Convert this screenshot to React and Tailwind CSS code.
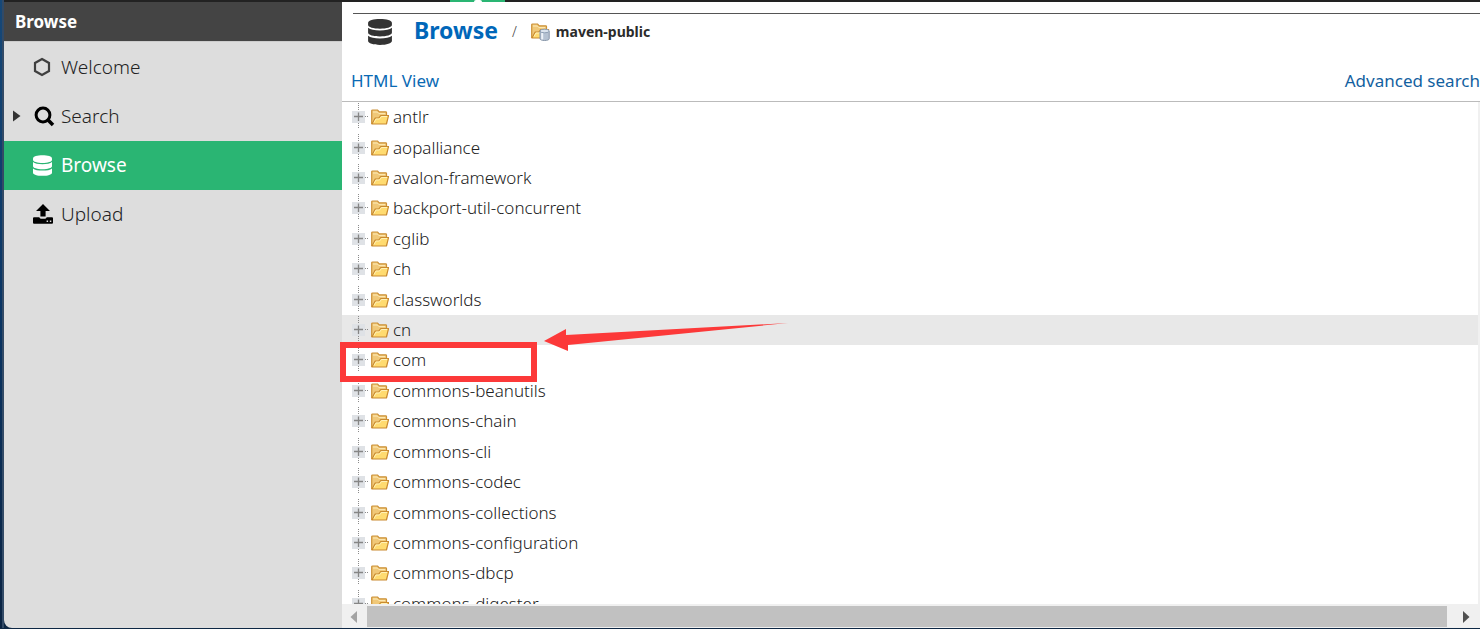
const FOLDERS = [
  'antlr',
  'aopalliance',
  'avalon-framework',
  'backport-util-concurrent',
  'cglib',
  'ch',
  'classworlds',
  'cn',
  'com',
  'commons-beanutils',
  'commons-chain',
  'commons-cli',
  'commons-codec',
  'commons-collections',
  'commons-configuration',
  'commons-dbcp',
  'commons-digester',
];

function HexagonIcon() {
  return (
    <svg width="20" height="20" viewBox="0 0 20 20" fill="none" stroke="#3f3f3f" strokeWidth="2.2" aria-hidden="true">
      <path d="M9 2 16 6v8L9 18 2 14V6z" />
    </svg>
  );
}

function SearchIcon() {
  return (
    <svg width="22" height="22" viewBox="0 0 22 22" fill="none" stroke="#000" aria-hidden="true">
      <circle cx="10" cy="10" r="6.9" strokeWidth="3" />
      <path d="M14.8 14.8 20 20" strokeWidth="3.6" />
    </svg>
  );
}

function DatabaseIcon({ className }) {
  return (
    <svg className={className} viewBox="0 0 22 24" fill="currentColor" aria-hidden="true">
      <path d="M0 3.6C0 1.4 5 0 11 0s11 1.4 11 3.6v2C22 7.6 17 9 11 9S0 7.6 0 5.6z" />
      <path d="M0 8c2 1.700 6 2.500 11 2.500S20 9.700 22 8v4.800c0 2-5 3.400-11 3.400S0 14.800 0 12.800z" />
      <path d="M0 15.400c2 1.700 6 2.500 11 2.500s9-.8 11-2.500v5c0 2.200-5 3.600-11 3.600S0 22.600 0 20.400z" />
    </svg>
  );
}

function UploadIcon() {
  return (
    <svg width="20" height="20" viewBox="0 0 20 20" aria-hidden="true">
      <path d="M10 0 17 7H12.600V12.600H7.400V7H3z" />
      <path
        fillRule="evenodd"
        d="M1 13.200h5.300c.5 1 1.300 1.500 2.300 1.500h2.800c1 0 1.800-.5 2.300-1.500H19q1 0 1 1v4.600q0 1-1 1H1q-1 0-1-1v-4.600q0-1 1-1zM13.600 16.600v1.500h1.500v-1.500zM16.800 16.600v1.500h1.500v-1.500z"
      />
    </svg>
  );
}

function FolderShape() {
  return (
    <>
      <path d="M.7 14.500V1.900Q.7 1 1.600 1h5l1.600 1.800h6.500q.8 0 .8.800V14.500z" fill="#f0c878" stroke="#cc9138" strokeWidth="1.200" />
      <path d="M2 3h4.400l1.500 1.600h6.300" fill="none" stroke="#fdebb8" />
      <path d="M1 15 4.200 9h3.600l1.900-2.500h7.900L15.400 15z" fill="#ffdb70" stroke="#c98a30" strokeWidth="1.200" strokeLinejoin="round" />
      <path d="m3 13.500 2-3.500h3.500l2-2.500h5.600" fill="none" stroke="#fff1b8" />
    </>
  );
}

function FolderIcon() {
  return (
    <svg width="18" height="16" viewBox="0 0 18 16" aria-hidden="true">
      <FolderShape />
    </svg>
  );
}

function RepositoryIcon() {
  return (
    <svg width="19" height="18" viewBox="0 0 19 18" aria-hidden="true">
      <FolderShape />
      <path d="M9 8.200v7.600c0 1 2 1.700 4.600 1.700s4.600-.7 4.600-1.700V8.200z" fill="#b5c2d2" stroke="#8796a9" />
      <path d="M11.200 9v7.400" stroke="#edf2f8" strokeWidth="2" />
      <ellipse cx="13.600" cy="8" rx="4.600" ry="1.800" fill="#dbe4ee" stroke="#8fa0b5" />
    </svg>
  );
}

function ExpanderIcon() {
  return (
    <svg width="18" height="28" viewBox="0 0 18 28" fill="none" aria-hidden="true">
      <rect x="0" y="8" width="13" height="12" fill="#dfe2e6" />
      <path d="M6.500 0v8M6.500 20v6M13 13.500h4" stroke="#8a8a8a" strokeDasharray="1 1" />
      <path d="M6.500 9.500v8.500M2 13.500h9" stroke="#858585" strokeWidth="1.300" />
    </svg>
  );
}

function NavItem({ icon, label, active, expandable }) {
  return (
    <li className={active ? 'bg-[#2ab573]' : ''}>
      <a
        href={`#${label.toLowerCase()}`}
        className={
          active
            ? 'flex h-full items-center pl-[9px] text-[19px] leading-6 text-white'
            : 'flex h-full items-center pl-[9px] text-[19px] leading-6 font-light text-[#222]'
        }
      >
        <span className="flex w-5 items-center">
          {expandable && (
            <svg width="8" height="12" viewBox="0 0 8 12" fill="#333" aria-hidden="true">
              <path d="M0 0.500 7.500 6 0 11.500z" />
            </svg>
          )}
        </span>
        <span className="flex w-7 items-center">{icon}</span>
        {label}
      </a>
    </li>
  );
}

function Sidebar() {
  return (
    <aside className="flex w-[338px] shrink-0 flex-col bg-[#ddd]">
      <h2 className="flex h-10 items-center border-b border-[#ccc] bg-[#444] px-[11px] text-[17px] font-bold text-white">
        Browse
      </h2>
      <nav>
        <ul className="grid h-[197px] grid-rows-4">
          <NavItem icon={<HexagonIcon />} label="Welcome" />
          <NavItem icon={<SearchIcon />} label="Search" expandable />
          <NavItem icon={<DatabaseIcon className="h-[21px] w-[19px]" />} label="Browse" active />
          <NavItem icon={<UploadIcon />} label="Upload" />
        </ul>
      </nav>
    </aside>
  );
}

function Annotation() {
  return (
    <div className="pointer-events-none absolute top-[340px] -left-0.5 flex">
      <div className="h-10 w-[197px] border-[6px] border-[#fc3939]" />
      <svg className="absolute -top-5 left-[204px]" width="246" height="30" viewBox="0 0 246 30" aria-hidden="true">
        <path d="M0 19 22 7v6L244 1 24 23v6z" fill="#fc3939" />
      </svg>
    </div>
  );
}

function Tree() {
  return (
    <div className="flex min-h-0 flex-1 overflow-hidden">
      <ul className="grid h-[517px] flex-1 auto-rows-fr">
        {FOLDERS.map((name) => (
          <li
            key={name}
            className={name === 'cn' ? 'flex items-center bg-[#e8e8e8] pl-2.5' : 'flex items-center pl-2.5'}
          >
            <button type="button" aria-label={`Expand ${name}`} className="mr-px flex">
              <ExpanderIcon />
            </button>
            <FolderIcon />
            <span className="ml-1 text-[17px] leading-6 font-light text-[#222]">{name}</span>
          </li>
        ))}
      </ul>
      <div className="w-0.5 bg-[#f0f0f0]" />
    </div>
  );
}

function Scrollbar() {
  return (
    <div className="flex h-6 shrink-0 items-stretch bg-[#f0f0f0] pt-0.5">
      <button type="button" aria-label="Scroll left" className="flex w-[25px] items-center pl-2">
        <svg width="8" height="12" viewBox="0 0 8 12" fill="#a3a3a3" aria-hidden="true">
          <path d="M7 0v12L.5 6z" />
        </svg>
      </button>
      <div className="mb-px flex-1 bg-[#c1c1c1]" />
      <button type="button" aria-label="Scroll right" className="flex w-[33px] items-center pl-4">
        <svg width="8" height="12" viewBox="0 0 8 12" fill="#505050" aria-hidden="true">
          <path d="M0 0v12L6.500 6z" />
        </svg>
      </button>
    </div>
  );
}

export default function App() {
  return (
    <div className="flex h-screen overflow-hidden bg-linear-to-b from-[#0d2b50] via-[#0b2a50] to-[#0d2744] pb-px font-['Noto_Sans',sans-serif]">
      <div className="w-0.5 shrink-0 bg-linear-to-b from-[#164878] via-[#0a3564] to-[#0a2342]" />
      <div className="w-0.5 shrink-0 bg-[#324a66]" />
      <div className="flex min-w-0 flex-1 flex-col overflow-hidden rounded-bl-lg">
        <div className="flex h-0.5 shrink-0 bg-[#222] pl-[446px]">
          <div className="flex w-[55px] justify-center bg-[#2ab573]">
            <div className="w-2 rounded-t-full bg-white" />
          </div>
        </div>
        <div className="flex min-h-0 flex-1">
          <Sidebar />
          <main className="relative flex min-w-0 flex-1 flex-col bg-white">
            <header className="border-b border-[#bbb] pt-[11px]">
              <div className="ml-[11px] flex h-9 items-center border-t border-[#555] pl-[15px]">
                <DatabaseIcon className="h-[26px] w-6 shrink-0 text-[#333]" />
                <h1 className="ml-[22px] pb-1 text-[23px] leading-8 font-bold text-[#0067b9]">Browse</h1>
                <span className="ml-3.5 text-sm font-light text-[#444]">/</span>
                <span className="ml-3.5 flex items-center gap-1.5 text-sm font-bold text-[#2b2b2b]">
                  <RepositoryIcon />
                  maven-public
                </span>
              </div>
              <div className="flex items-center justify-between pt-5 pb-2 pl-[9px] text-[17px] leading-6">
                <a href="#html-view" className="text-[#0b6ab4]">
                  HTML View
                </a>
                <a href="#advanced-search" className="text-[#135f9f]">
                  Advanced search
                </a>
              </div>
            </header>
            <Tree />
            <Scrollbar />
            <Annotation />
          </main>
        </div>
      </div>
    </div>
  );
}
